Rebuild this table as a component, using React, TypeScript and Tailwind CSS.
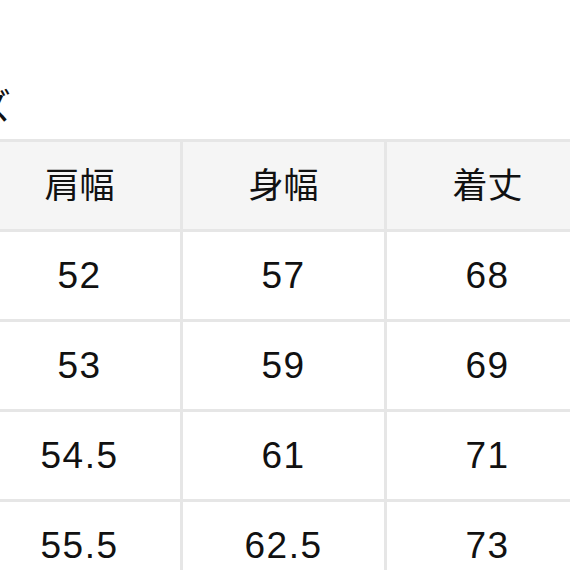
const headers = ["肩幅", "身幅", "着丈"];

const rows = [
  ["52", "57", "68"],
  ["53", "59", "69"],
  ["54.5", "61", "71"],
  ["55.5", "62.5", "73"],
];

const font = {
  fontFamily: '"Liberation Sans", "Noto Sans CJK JP", sans-serif',
};

const Cell = ({ text, header }: { text: string; header?: boolean }) => (
  <div
    className={`flex h-[90px] w-[204px] shrink-0 items-center justify-center border-r-[3px] border-b-[3px] border-[#e6e6e6] leading-none text-[#111] ${
      header ? "bg-[#f5f5f5] text-[35px]" : "bg-white text-[37px] tracking-[1.5px]"
    }`}
  >
    {text}
  </div>
);

export default function App() {
  return (
    <div
      className="relative h-[570px] w-[570px] overflow-hidden bg-white"
      style={font}
    >
      <div className="h-[139px] pt-[90px]">
        <h2 className="ml-[-96px] text-[36px] leading-none font-normal text-[#111]">
          サイズ
        </h2>
      </div>
      <div className="ml-[-24px] w-max border-t-[3px] border-l-[3px] border-[#e6e6e6]">
        <div className="flex">
          {headers.map((h) => (
            <Cell key={h} text={h} header />
          ))}
        </div>
        {rows.map((r, i) => (
          <div key={i} className="flex">
            {r.map((v, j) => (
              <Cell key={j} text={v} />
            ))}
          </div>
        ))}
      </div>
    </div>
  );
}
